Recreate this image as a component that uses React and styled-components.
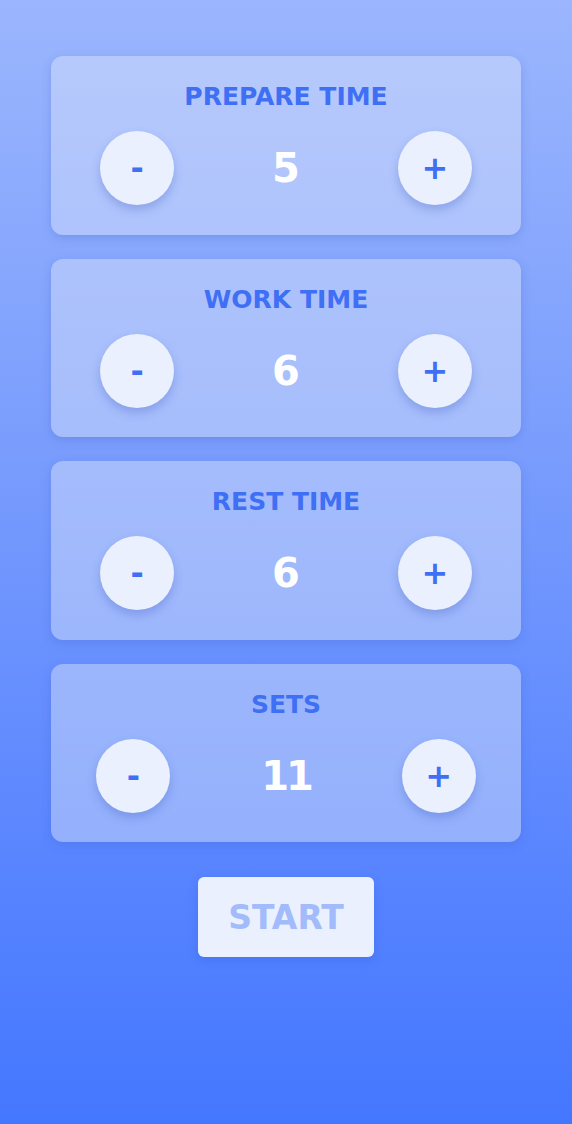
import React, { useState } from 'react';
import styled, { createGlobalStyle } from 'styled-components';

const GlobalStyle = createGlobalStyle`
  html, body {
    margin: 0;
    padding: 0;
  }
  body {
    font-family: 'DejaVu Sans', 'Noto Sans', sans-serif;
  }
`;

const Page = styled.div`
  min-height: 1124px;
  background: linear-gradient(180deg, #9bb6fd 0%, #7ea0fd 35%, #5a86ff 75%, #4477ff 100%);
  display: flex;
  flex-direction: column;
  align-items: center;
  padding-top: 56px;
  box-sizing: border-box;
`;

const Cards = styled.div`
  display: flex;
  flex-direction: column;
  gap: 24px;
  width: 470px;
`;

const Card = styled.div`
  background: rgba(220, 228, 250, 0.45);
  border-radius: 12px;
  box-shadow: 0 3px 10px rgba(60, 90, 190, 0.25);
  padding: 26px 0 29.5px;
  display: flex;
  flex-direction: column;
  align-items: center;
`;

const Title = styled.h2`
  margin: 0;
  font-size: 25px;
  line-height: 30px;
  font-weight: 700;
  color: #3f6ff4;
`;

const Row = styled.div`
  margin-top: 19px;
  width: 100%;
  display: flex;
  align-items: center;
  justify-content: space-around;
`;

const RoundButton = styled.button`
  width: 74px;
  height: 74px;
  border-radius: 50%;
  border: none;
  background: #ebf0fe;
  color: #3f6ff4;
  font-family: inherit;
  font-size: 32px;
  font-weight: 700;
  box-shadow: 0 5px 10px rgba(60, 90, 190, 0.3);
  cursor: pointer;
  display: flex;
  align-items: center;
  justify-content: center;
  padding: 0;
`;

const Value = styled.span`
  font-size: 40px;
  font-weight: 700;
  color: #ffffff;
  line-height: 1;
  letter-spacing: ${(p) => (p.tight ? '-3px' : '0')};
`;

const StartButton = styled.button`
  margin-top: 35px;
  width: 176px;
  height: 80px;
  border: none;
  border-radius: 6px;
  background: #eaf0fe;
  color: #a2bbfa;
  font-family: inherit;
  font-size: 33px;
  font-weight: 700;
  box-shadow: 0 3px 10px rgba(40, 80, 200, 0.25);
  cursor: pointer;
`;

const Setting = ({ label, value, onChange }) => (
  <Card>
    <Title>{label}</Title>
    <Row>
      <RoundButton onClick={() => onChange(Math.max(0, value - 1))}>-</RoundButton>
      <Value tight={String(value).length > 1}>{value}</Value>
      <RoundButton onClick={() => onChange(value + 1)}>+</RoundButton>
    </Row>
  </Card>
);

export default function App() {
  const [prepare, setPrepare] = useState(5);
  const [work, setWork] = useState(6);
  const [rest, setRest] = useState(6);
  const [sets, setSets] = useState(11);

  return (
    <Page>
      <GlobalStyle />
      <Cards>
        <Setting label="PREPARE TIME" value={prepare} onChange={setPrepare} />
        <Setting label="WORK TIME" value={work} onChange={setWork} />
        <Setting label="REST TIME" value={rest} onChange={setRest} />
        <Setting label="SETS" value={sets} onChange={setSets} />
      </Cards>
      <StartButton>START</StartButton>
    </Page>
  );
}
